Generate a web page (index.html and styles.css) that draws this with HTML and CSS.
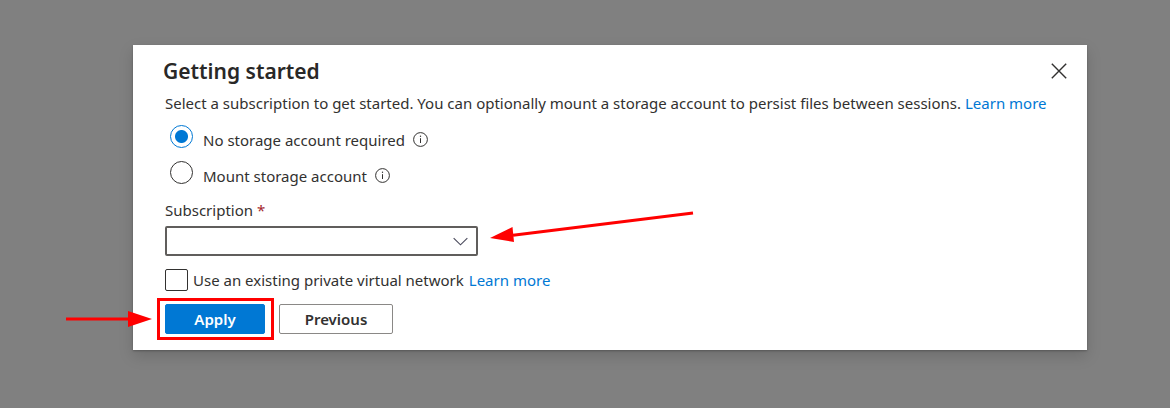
FILE: index.html
```html
<!DOCTYPE html>
<html lang="en">
<head>
<meta charset="utf-8">
<meta name="viewport" content="width=device-width, initial-scale=1">
<title>Getting started</title>
<link rel="stylesheet" href="styles.css">
</head>
<body>
<main class="backdrop">
  <section class="dialog" role="dialog" aria-labelledby="dialog-title">
    <header class="dialog-header">
      <h1 class="dialog-title" id="dialog-title">Getting started</h1>
      <button class="close" type="button" aria-label="Close">
        <svg width="16" height="16" viewBox="0 0 16 16" aria-hidden="true"><path d="M.8.8 15.2 15.2M15.2.8.8 15.2" fill="none" stroke="#323130" stroke-width="1.4"/></svg>
      </button>
    </header>
    <form class="dialog-form">
      <p class="intro">Select a subscription to get started. You can optionally mount a storage account to persist files between sessions. <a class="link" href="#">Learn more</a></p>

      <div class="option">
        <input class="radio" type="radio" name="storage" id="storage-none" checked>
        <label class="option-label" for="storage-none">No storage account required</label>
        <svg class="info" viewBox="0 0 15 15" aria-hidden="true"><circle cx="7.5" cy="7.5" r="6.9" fill="none" stroke="#323130"/><path d="M7.5 6.2v4.8" stroke="#323130"/><circle cx="7.5" cy="4.3" r=".7" fill="#323130"/></svg>
      </div>
      <div class="option">
        <input class="radio" type="radio" name="storage" id="storage-mount">
        <label class="option-label" for="storage-mount">Mount storage account</label>
        <svg class="info" viewBox="0 0 15 15" aria-hidden="true"><circle cx="7.5" cy="7.5" r="6.9" fill="none" stroke="#323130"/><path d="M7.5 6.2v4.8" stroke="#323130"/><circle cx="7.5" cy="4.3" r=".7" fill="#323130"/></svg>
      </div>

      <label class="field-label" for="subscription">Subscription <span class="required">*</span></label>
      <div class="field">
        <select class="select" id="subscription" required><option value=""></option></select>
        <svg class="chevron" viewBox="0 0 16 9" aria-hidden="true"><path d="M.7.8 8 8 15.3.8" fill="none" stroke="#4a4a5c" stroke-width="1.2"/></svg>
        <svg class="arrow-select" viewBox="0 0 206 36" aria-hidden="true"><path d="M24 26.2 204 4" stroke="#f00" stroke-width="3"/><path d="M1 29 23.5 18 25 33Z" fill="#f00"/></svg>
      </div>

      <div class="network">
        <input class="checkbox" type="checkbox" id="network">
        <label for="network">Use an existing private virtual network</label>
        <a class="link" href="#">Learn more</a>
      </div>

      <div class="actions">
        <div class="apply">
          <button class="button primary" type="button">Apply</button>
          <span class="highlight"></span>
          <svg class="arrow-apply" viewBox="0 0 86 18" aria-hidden="true"><path d="M0 9h64" stroke="#f00" stroke-width="3"/><path d="M62 1v16l24-8Z" fill="#f00"/></svg>
        </div>
        <button class="button" type="button">Previous</button>
      </div>
    </form>
  </section>
</main>
</body>
</html>
```
FILE: styles.css
```css
* {
  box-sizing: border-box;
}

body {
  margin: 0;
  background: #808080;
  color: #323130;
  font: 15px/24px "Noto Sans", "Open Sans", sans-serif;
}

.backdrop {
  padding: 45px 83px 24px 133px;
}

.dialog {
  padding: 11px 20px 16px 30px;
  background: #fff;
  box-shadow: 0 1px 2px rgba(0, 0, 0, 0.25), 0 6px 14px rgba(0, 0, 0, 0.15);
}

.dialog-header {
  display: flex;
  align-items: center;
  justify-content: space-between;
  height: 30px;
}

.dialog-title {
  margin: 0;
  color: #292827;
  font-size: 21px;
  font-weight: 600;
  line-height: 32px;
}

.close {
  display: flex;
  padding: 0;
  border: 0;
  background: none;
}

.dialog-form {
  padding: 5px 0 0 2px;
}

.intro {
  margin: 0 0 10px;
}

.link {
  color: #0078d4;
  text-decoration: none;
}

.option {
  display: flex;
  align-items: flex-start;
  height: 36px;
  padding-left: 5px;
}

.radio {
  flex: none;
  width: 23px;
  height: 23px;
  margin: 0 10px 0 0;
  border: 1px solid #323130;
  border-radius: 50%;
  background: #fff;
  appearance: none;
}

.radio:checked {
  border-color: #0078d4;
  background: radial-gradient(circle, #0078d4 6px, #fff 7px);
}

.option-label {
  padding-top: 3px;
}

.info {
  flex: none;
  width: 15px;
  height: 15px;
  margin: 7px 0 0 8px;
}

.field-label {
  display: block;
  margin-top: 1px;
}

.required {
  color: #a4262c;
}

.field {
  position: relative;
  max-width: 313px;
  margin-top: 4px;
}

.select {
  display: block;
  width: 100%;
  height: 30px;
  padding: 0 32px 0 8px;
  border: 2px solid #605e5c;
  border-radius: 2px;
  background: #fff;
  appearance: none;
}

.chevron {
  position: absolute;
  top: 11px;
  right: 10px;
  width: 15px;
  height: 9px;
  pointer-events: none;
}

.arrow-select {
  position: absolute;
  top: -17px;
  left: 324px;
  width: 206px;
  height: 36px;
}

.network {
  display: flex;
  align-items: center;
  gap: 5px;
  margin-top: 12px;
}

.checkbox {
  flex: none;
  width: 23px;
  height: 22px;
  margin: 0;
  border: 1px solid #323130;
  border-radius: 2px;
  background: #fff;
  appearance: none;
}

.actions {
  display: flex;
  gap: 14px;
  margin-top: 12px;
}

.apply {
  position: relative;
}

.button {
  display: block;
  width: 114px;
  height: 30px;
  padding: 0;
  border: 1px solid #8a8886;
  border-radius: 2px;
  background: #fff;
  color: #323130;
  font: inherit;
  font-weight: 600;
}

.primary {
  width: 100px;
  border-color: #0078d4;
  background: #0078d4;
  color: #fff;
}

.highlight {
  position: absolute;
  inset: -6px -9px -6px -8px;
  border: 3px solid #f00;
  pointer-events: none;
}

.arrow-apply {
  position: absolute;
  top: 6px;
  left: -99px;
  width: 86px;
  height: 18px;
}
```
